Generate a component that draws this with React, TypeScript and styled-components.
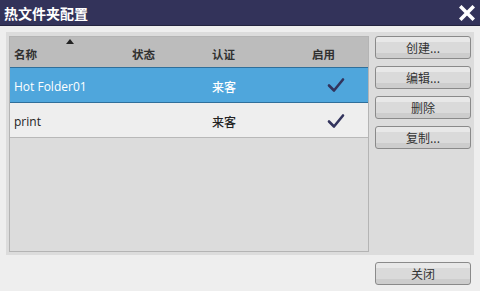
import React from 'react';
import styled, { createGlobalStyle } from 'styled-components';

const GlobalStyle = createGlobalStyle`
  html, body {
    margin: 0;
    padding: 0;
    background: #eeeeee;
  }
  body {
    font-family: "Open Sans", "Noto Sans CJK SC", sans-serif;
    font-size: 12px;
    color: #222;
  }
`;

interface Folder {
  name: string;
  auth: string;
  enabled: boolean;
}

const folders: Folder[] = [
  { name: 'Hot Folder01', auth: '来客', enabled: true },
  { name: 'print', auth: '来客', enabled: true },
];

const Check = () => (
  <svg width="18" height="16" viewBox="0 0 18 16">
    <path d="M2 8.5 L7 13.5 L16 2.5" fill="none" stroke="#32335c" strokeWidth="2.6" strokeLinecap="round" strokeLinejoin="round" />
  </svg>
);

const CloseIcon = () => (
  <svg width="16" height="16" viewBox="0 0 16 16">
    <path d="M2.5 2.5 L13.5 13.5 M13.5 2.5 L2.5 13.5" stroke="#fff" strokeWidth="3.6" strokeLinecap="square" />
  </svg>
);

const App = () => (
  <>
    <GlobalStyle />
    <Window>
      <TitleBar>
        <Title>热文件夹配置</Title>
        <CloseBtn aria-label="关闭">
          <CloseIcon />
        </CloseBtn>
      </TitleBar>
      <Panel>
        <Table>
          <HeaderRow>
            <HeadCell>
              名称
              <SortArrow />
            </HeadCell>
            <HeadCell>状态</HeadCell>
            <HeadCell>认证</HeadCell>
            <HeadCell>启用</HeadCell>
          </HeaderRow>
          {folders.map((f, i) => (
            <Row key={f.name} selected={i === 0}>
              <NameCell>{f.name}</NameCell>
              <Cell />
              <AuthCell>{f.auth}</AuthCell>
              <CheckCell>{f.enabled && <Check />}</CheckCell>
            </Row>
          ))}
        </Table>
        <Actions>
          <Button>创建...</Button>
          <Button>编辑...</Button>
          <Button>删除</Button>
          <Button>复制...</Button>
        </Actions>
      </Panel>
      <Footer>
        <Button>关闭</Button>
      </Footer>
    </Window>
  </>
);

const Window = styled.div`
  width: 480px;
  height: 291px;
  display: flex;
  flex-direction: column;
  background: #eeeeee;
  overflow: hidden;
`;

const TitleBar = styled.div`
  height: 25px;
  background: #33335a;
  border-bottom: 1px solid #24243f;
  display: flex;
  align-items: center;
  justify-content: space-between;
  padding: 0 4px 0 4px;
`;

const Title = styled.div`
  color: #fff;
  font-family: "Noto Sans CJK SC", sans-serif;
  font-weight: 700;
  font-size: 14px;
`;

const CloseBtn = styled.button`
  border: 0;
  background: none;
  padding: 0;
  width: 18px;
  height: 18px;
  display: flex;
  align-items: center;
  justify-content: center;
`;

const Panel = styled.div`
  margin: 6px 6px 0 6px;
  height: 223px;
  background: #dcdcdc;
  display: flex;
  padding: 4px 3px 3px 3px;
  gap: 6px;
  box-sizing: border-box;
`;

const Table = styled.div`
  width: 361px;
  height: 216px;
  box-sizing: border-box;
  border: 1px solid #b4b4b4;
  display: flex;
  flex-direction: column;
`;

const HeaderRow = styled.div`
  display: grid;
  grid-template-columns: 118px 80px 100px 1fr;
  height: 30px;
  background: #bcbcbc;
  font-family: "Noto Sans CJK SC", sans-serif;
  font-weight: 700;
  font-size: 11.5px;
  color: #303030;
`;

const HeadCell = styled.div`
  position: relative;
  display: flex;
  align-items: center;
  padding: 4px 0 0 4px;
`;

const SortArrow = styled.span`
  position: absolute;
  left: 56px;
  top: 2px;
  width: 0;
  height: 0;
  border-left: 4px solid transparent;
  border-right: 4px solid transparent;
  border-bottom: 5px solid #222;
`;

const Row = styled.div<{ selected?: boolean }>`
  display: grid;
  grid-template-columns: 118px 80px 100px 1fr;
  height: ${(p) => (p.selected ? '36px' : '35px')};
  box-sizing: border-box;
  background: ${(p) => (p.selected ? '#4fa6dc' : '#eeeeee')};
  color: ${(p) => (p.selected ? '#ffffff' : '#222222')};
  border-top: 1px solid ${(p) => (p.selected ? '#2f6f9a' : 'transparent')};
  border-bottom: 1px solid ${(p) => (p.selected ? '#2f6f9a' : '#b8b8b8')};
`;

const Cell = styled.div`
  display: flex;
  align-items: center;
  padding-left: 4px;
`;

const NameCell = styled(Cell)`
  font-size: 12px;
  padding-top: 2px;
`;

const AuthCell = styled(Cell)`
  font-family: "Noto Sans CJK SC", sans-serif;
  font-weight: 500;
  font-size: 12px;
  padding-top: 2px;
`;

const CheckCell = styled(Cell)`
  padding-left: 19px;
`;

const Actions = styled.div`
  display: flex;
  flex-direction: column;
  gap: 7px;
`;

const Button = styled.button`
  width: 96px;
  height: 23px;
  box-sizing: border-box;
  border: 1px solid #8a8a8a;
  border-radius: 3px;
  padding: 0;
  background: linear-gradient(
    #e8e8e8 0%,
    #e8e8e8 24%,
    #dadada 26%,
    #dadada 74%,
    #cdcdcd 76%,
    #cdcdcd 100%
  );
  font-family: "Noto Sans CJK SC", sans-serif;
  font-size: 12px;
  color: #333;
  display: flex;
  align-items: center;
  justify-content: center;
`;

const Footer = styled.div`
  display: flex;
  justify-content: flex-end;
  padding: 7px 9px 0 0;
`;

export default App;
